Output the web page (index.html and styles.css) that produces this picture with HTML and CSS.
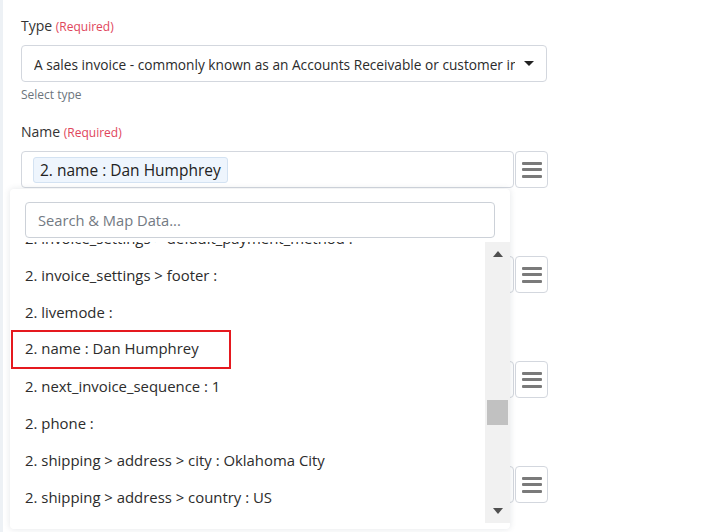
FILE: index.html
```html
<!DOCTYPE html>
<html>
<head>
<meta charset="utf-8">
<link rel="stylesheet" href="styles.css">
</head>
<body>
<div class="page">
  <div class="field">
    <div class="label">Type <span class="req">(Required)</span></div>
    <div class="select">
      <span class="select-text">A sales invoice - commonly known as an Accounts Receivable or customer invoice.</span>
      <span class="caret"></span>
    </div>
    <div class="help">Select type</div>
  </div>

  <div class="field">
    <div class="label">Name <span class="req">(Required)</span></div>
    <div class="input-row">
      <div class="input"><span class="chip">2. name : Dan Humphrey</span></div>
      <button class="menu-btn" type="button"><span class="bars"><i></i><i></i><i></i></span></button>
    </div>
  </div>

  <div class="field field-gap">
    <div class="label">Description</div>
    <div class="input-row">
      <div class="input"></div>
      <button class="menu-btn" type="button"><span class="bars"><i></i><i></i><i></i></span></button>
    </div>
  </div>

  <div class="field field-gap">
    <div class="label">Email</div>
    <div class="input-row">
      <div class="input"></div>
      <button class="menu-btn" type="button"><span class="bars"><i></i><i></i><i></i></span></button>
    </div>
  </div>

  <div class="field field-gap">
    <div class="label">Phone</div>
    <div class="input-row">
      <div class="input"></div>
      <button class="menu-btn" type="button"><span class="bars"><i></i><i></i><i></i></span></button>
    </div>
  </div>

  <div class="dropdown">
    <div class="search-wrap">
      <div class="search">Search &amp; Map Data...</div>
    </div>
    <div class="list-area">
      <div class="list-view">
        <ul class="list">
          <li>2. invoice_settings &gt; default_payment_method :</li>
          <li>2. invoice_settings &gt; footer :</li>
          <li>2. livemode :</li>
          <li class="selected">2. name : Dan Humphrey</li>
          <li>2. next_invoice_sequence : 1</li>
          <li>2. phone :</li>
          <li>2. shipping &gt; address &gt; city : Oklahoma City</li>
          <li>2. shipping &gt; address &gt; country : US</li>
        </ul>
      </div>
      <div class="scrollbar">
        <span class="arrow up"></span>
        <div class="track"><span class="thumb"></span></div>
        <span class="arrow down"></span>
      </div>
    </div>
  </div>
</div>
</body>
</html>
```

FILE: styles.css
```css
* { box-sizing: border-box; }

html, body {
  margin: 0;
  height: 100%;
}

body {
  background: linear-gradient(to right, #edf1f5 0, #edf1f5 3px, #ffffff 3px);
  font-family: "Open Sans", "Liberation Sans", sans-serif;
  color: #333333;
  overflow: hidden;
}

.page {
  position: relative;
  padding: 16px 0 0 21px;
  width: 548px;
  height: 532px;
}

.label {
  font-size: 14px;
  line-height: 20px;
  height: 20px;
  color: #333333;
  margin-bottom: 9px;
}

.req {
  font-size: 12px;
  color: #e0465c;
}

.select {
  display: flex;
  align-items: center;
  width: 526px;
  height: 37px;
  border: 1px solid #d3d7de;
  border-radius: 4px;
  padding: 2px 12px 0 12px;
  background: #fff;
}

.select-text {
  flex: 1;
  white-space: nowrap;
  overflow: hidden;
  font-size: 13.7px;
  color: #2b2b2b;
  margin-right: 9px;
}

.caret {
  width: 0;
  height: 0;
  border-left: 5px solid transparent;
  border-right: 5px solid transparent;
  border-top: 5px solid #222;
  margin-top: -2px;
}

.help {
  font-size: 12px;
  line-height: 16px;
  color: #6c757d;
  margin-top: 5px;
  margin-bottom: 19px;
}

.input-row {
  display: flex;
  gap: 1px;
  height: 37px;
}

.input {
  width: 493px;
  height: 37px;
  border: 1px solid #d3d7de;
  border-radius: 4px;
  padding: 5px 0 0 11px;
  background: #fff;
}

.chip {
  display: inline-flex;
  align-items: center;
  height: 26px;
  padding: 0 6px;
  background: #eef5fd;
  border: 1px solid #d3e2f2;
  border-radius: 3px;
  font-size: 15.5px;
  color: #222;
}

.menu-btn {
  width: 33px;
  height: 37px;
  border: 1px solid #d3d7de;
  border-radius: 4px;
  background: #fff;
  padding: 0;
  display: flex;
  align-items: center;
  justify-content: center;
}

.bars {
  display: flex;
  flex-direction: column;
  gap: 3.5px;
}

.bars i {
  display: block;
  width: 20px;
  height: 3px;
  background: #7a7a7a;
  border-radius: 1px;
}

.field-gap {
  margin-top: 39px;
}

.field-gap .label {
  visibility: hidden;
}

/* dropdown overlay */
.dropdown {
  position: absolute;
  left: 10px;
  top: 189px;
  width: 500px;
  height: 340px;
  background: #fff;
  border-radius: 4px;
  box-shadow: 0 0 6px rgba(60, 70, 90, 0.14);
  display: flex;
  flex-direction: column;
}

.search-wrap {
  padding: 13px 15px 0 15px;
  height: 53px;
}

.search {
  height: 36px;
  border: 1px solid #ccd1d8;
  border-radius: 4px;
  padding: 0 12px;
  display: flex;
  align-items: center;
  font-size: 14.7px;
  color: #737a83;
}

.list-area {
  display: flex;
  height: 281px;
}

.list-view {
  flex: 1;
  overflow: hidden;
}

.list {
  list-style: none;
  margin: -22px 0 0 0;
  padding: 0;
}

.list li {
  height: 37px;
  line-height: 37px;
  padding-left: 15px;
  font-size: 14.9px;
  color: #2c2c2c;
  white-space: nowrap;
}

.list li.selected {
  width: 220px;
  margin-left: 1px;
  padding-left: 12px;
  border: 2px solid #e5191f;
  line-height: 33px;
  height: 39px;
  margin-top: -1px;
  margin-bottom: -1px;
}

.scrollbar {
  width: 25px;
  background: #f1f1f1;
  display: flex;
  flex-direction: column;
  align-items: center;
}

.arrow {
  width: 0;
  height: 0;
  border-left: 5.5px solid transparent;
  border-right: 5.5px solid transparent;
  margin: 9px 0;
}

.arrow.up {
  border-bottom: 6px solid #505050;
}

.arrow.down {
  border-top: 6px solid #505050;
}

.track {
  flex: 1;
  width: 100%;
  position: relative;
}

.thumb {
  position: absolute;
  left: 2px;
  right: 2px;
  top: 134px;
  height: 25px;
  background: #c1c1c1;
}
```
